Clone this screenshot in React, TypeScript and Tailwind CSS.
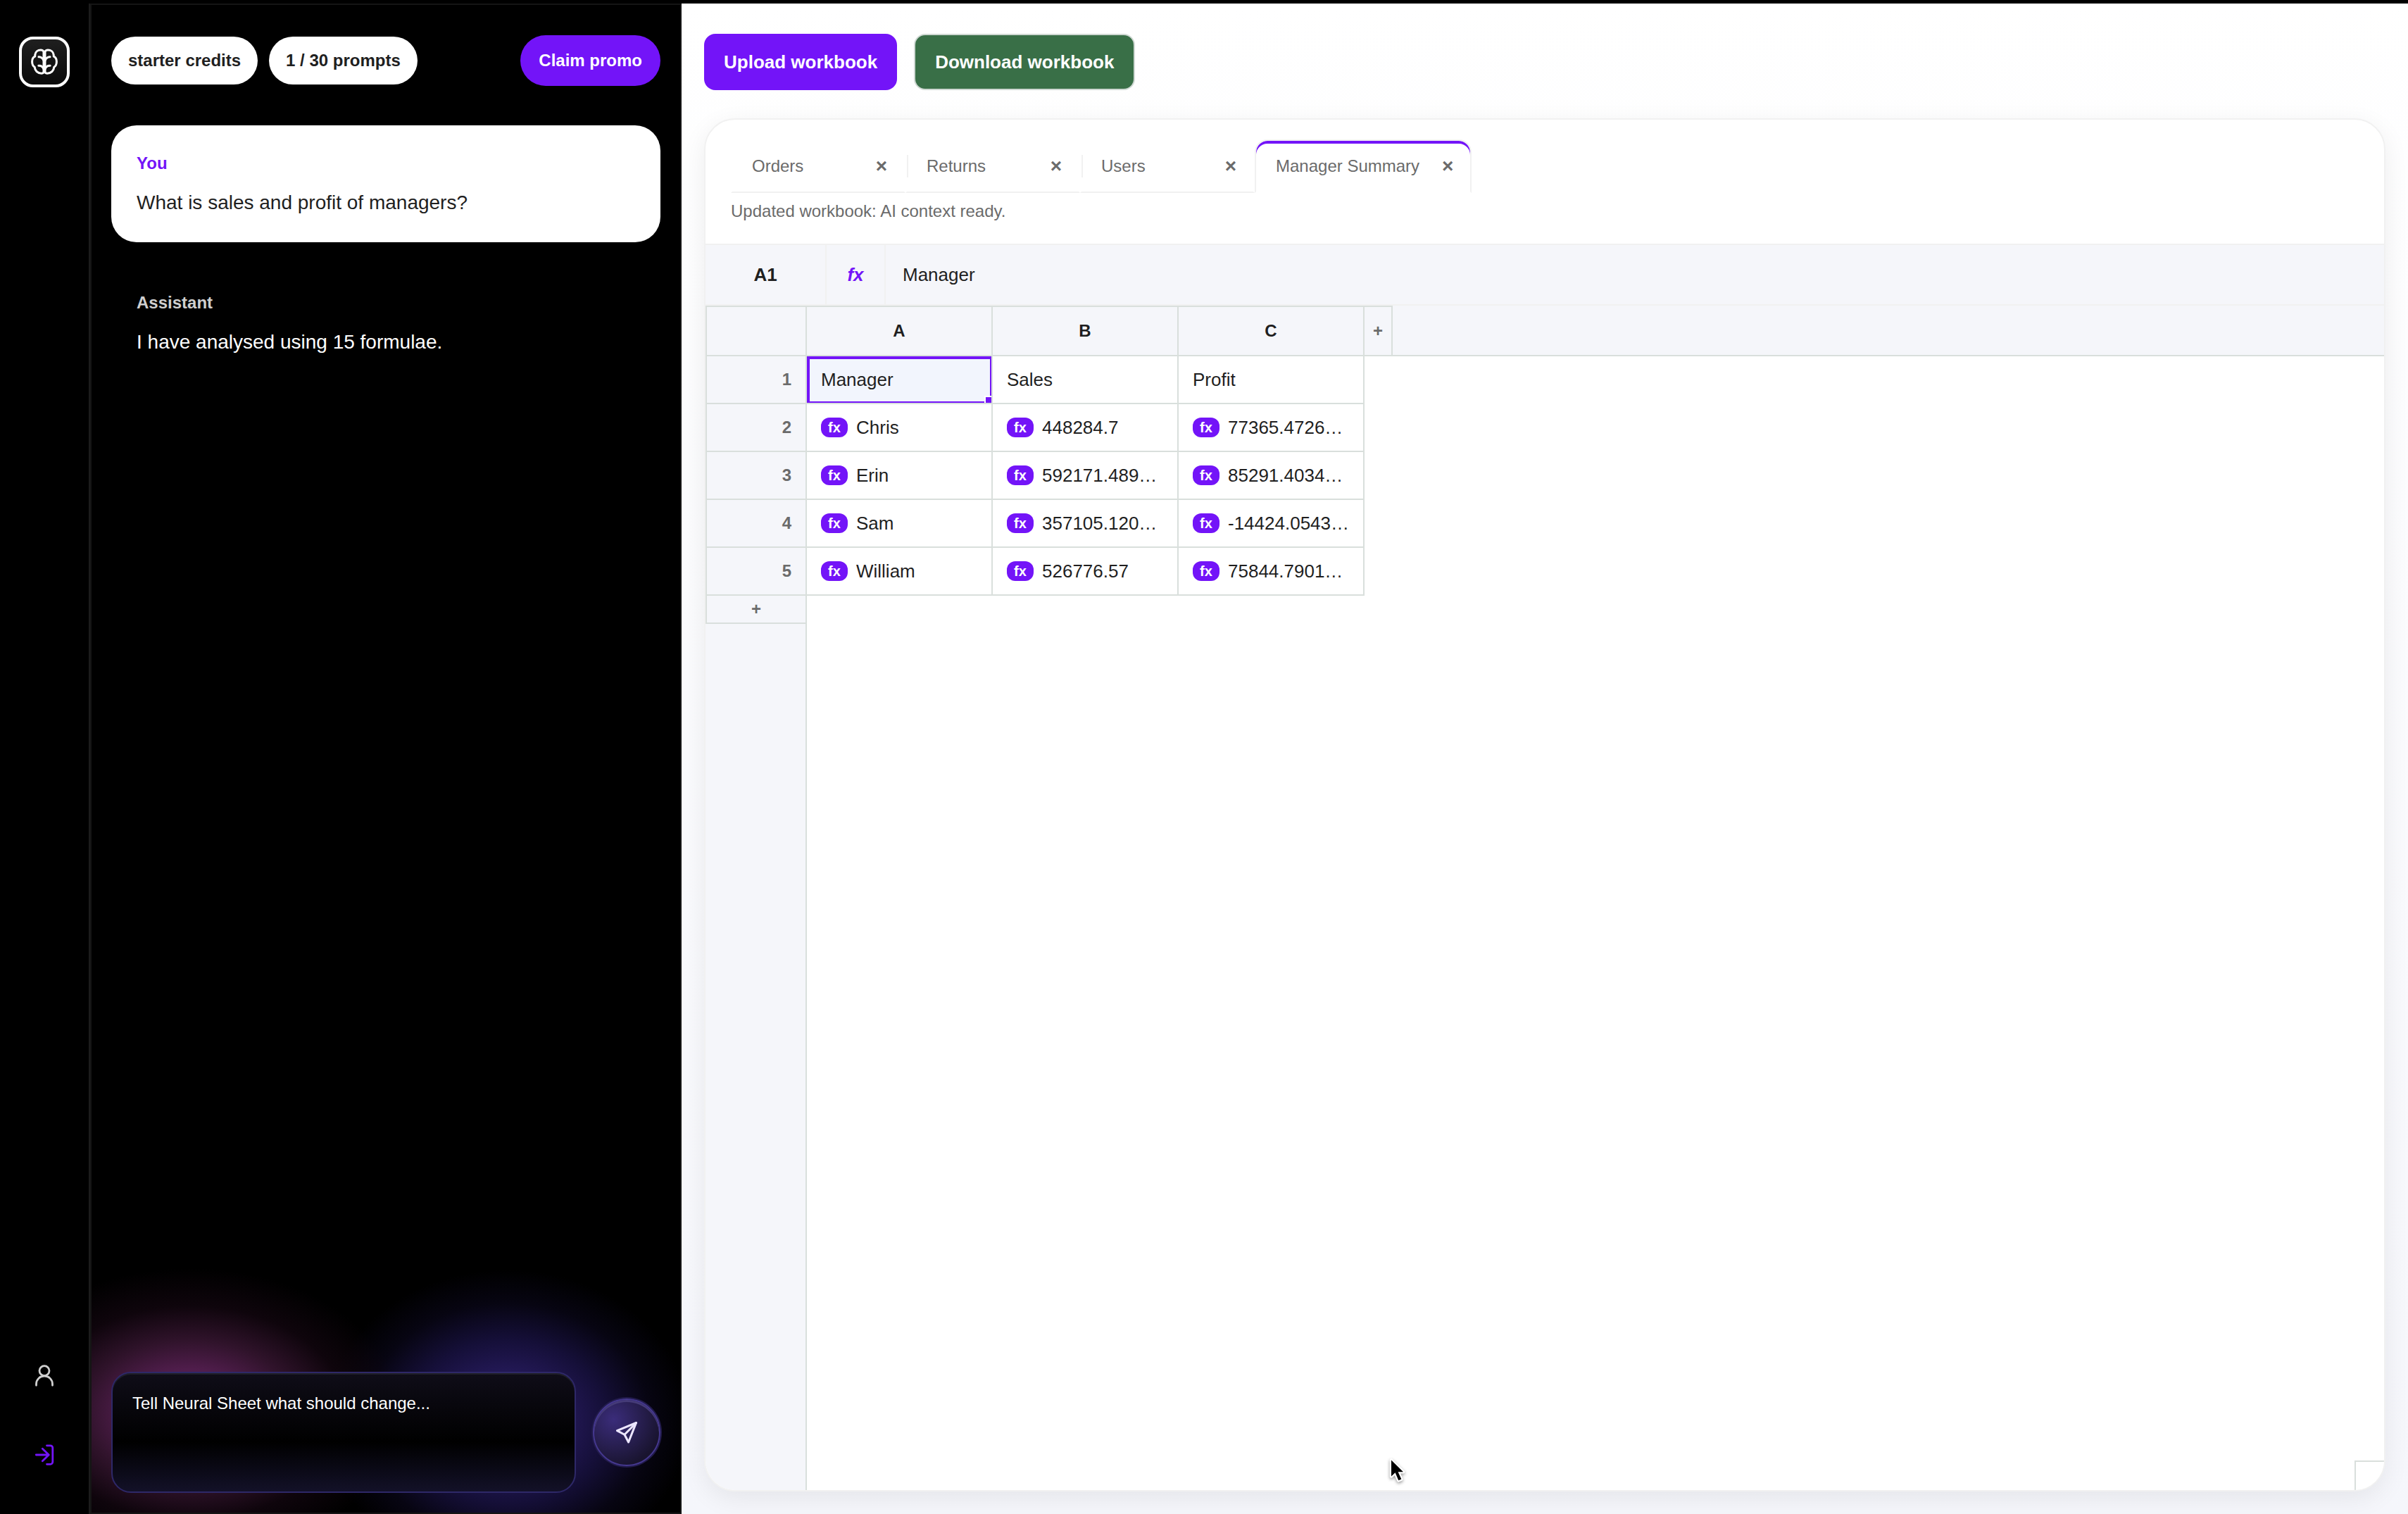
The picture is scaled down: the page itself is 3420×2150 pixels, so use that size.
import type { ReactNode } from "react";

type Cell = { value: string; formula?: boolean };

const TABS = [
  { name: "Orders", active: false },
  { name: "Returns", active: false },
  { name: "Users", active: false },
  { name: "Manager Summary", active: true },
];

const COLUMNS = ["A", "B", "C"];

const f = (value: string): Cell => ({ value, formula: true });

const ROWS: Cell[][] = [
  [{ value: "Manager" }, { value: "Sales" }, { value: "Profit" }],
  [f("Chris"), f("448284.7"), f("77365.4726…")],
  [f("Erin"), f("592171.489…"), f("85291.4034…")],
  [f("Sam"), f("357105.120…"), f("-14424.0543…")],
  [f("William"), f("526776.57"), f("75844.7901…")],
];

function BrainIcon() {
  return (
    <svg viewBox="0 0 40 40" className="size-10" fill="none" stroke="white" strokeWidth="3" strokeLinecap="round" strokeLinejoin="round" aria-hidden="true">
      <path d="M19 5.500C18.400 3.600 16.800 3 14.800 3 10.500 3 7.300 5.800 6.800 9.800L6.700 12.200C3.800 13.400 2.600 16 2.600 19.500 2.600 23 3.800 25.800 6.200 27.200 6.500 32.500 10.500 36.200 15.800 36.200 17.300 36.200 18.600 35.600 19 34.500Z" />
      <path d="M21 5.500C21.600 3.600 23.200 3 25.200 3 29.500 3 32.700 5.800 33.200 9.800L33.300 12.200C36.200 13.400 37.400 16 37.400 19.500 37.400 23 36.200 25.800 33.800 27.200 33.500 32.500 29.500 36.200 24.200 36.200 22.700 36.200 21.400 35.600 21 34.500Z" />
      <path d="M12 12.800C15.500 13 18 15 19 18M28 12.800C24.500 13 22 15 21 18M11.800 25.200C15.500 25 18 27 19 30M28.200 25.200C24.500 25 22 27 21 30" />
    </svg>
  );
}

function UserIcon() {
  return (
    <svg viewBox="0 0 32 32" className="size-8" fill="none" stroke="#cfcfcf" strokeWidth="2.800" strokeLinecap="round" aria-hidden="true">
      <circle cx="16" cy="8.600" r="7" />
      <path d="M4.500 29.300V27.500a11.500 11.500 0 0 1 23 0v1.800" />
    </svg>
  );
}

function SignInIcon() {
  return (
    <svg viewBox="0 0 32 32" className="size-8" fill="none" stroke="#7314f8" strokeWidth="2.800" strokeLinecap="round" strokeLinejoin="round" aria-hidden="true">
      <path d="M19.500 2.800H24.500a3.300 3.300 0 0 1 3.300 3.300V26a3.300 3.300 0 0 1-3.300 3.300H19.500" />
      <path d="M4.300 16H22M13.300 7.300L22.300 16L13.300 24.700" />
    </svg>
  );
}

function SendIcon() {
  return (
    <svg viewBox="0 0 32 32" className="size-8" fill="none" stroke="#ece6ff" strokeWidth="3" strokeLinecap="round" strokeLinejoin="round" aria-hidden="true">
      <path d="M29.500 2.500L2.500 13.600L13 19.300L18.600 30Z" />
      <path d="M29.500 2.500L13 19.300" />
    </svg>
  );
}

function Cursor() {
  return (
    <svg viewBox="0 0 28 40" className="pointer-events-none absolute bottom-[6px] left-[970px] h-10 w-7 drop-shadow-[0_2px_2px_rgba(0,0,0,0.4)]" aria-hidden="true">
      <path d="M4 3.500V26.500L9.600 21.300L14.300 32.300L18.300 30.600L13.600 20.300H21Z" fill="black" stroke="white" strokeWidth="4.500" strokeLinejoin="round" paintOrder="stroke" />
    </svg>
  );
}

function Rail() {
  return (
    <nav aria-label="Main" className="flex w-32 shrink-0 flex-col items-center border-r-2 border-[#1c1c1c] pt-[47px] pb-[68px]">
      <a href="#home" aria-label="Home" className="flex size-[72px] items-center justify-center rounded-[20px] border-4 border-white bg-linear-to-b from-[#1f1f1f] to-[#0a0a0a]">
        <BrainIcon />
      </a>
      <div className="mt-auto flex flex-col gap-20">
        <button type="button" aria-label="Account"><UserIcon /></button>
        <button type="button" aria-label="Sign in"><SignInIcon /></button>
      </div>
    </nav>
  );
}

function Pill({ children }: { children: ReactNode }) {
  return (
    <span className="flex h-[68px] items-center rounded-full bg-white px-6 text-[24px] leading-8 font-bold text-[#1f1f1f]">{children}</span>
  );
}

function Chat() {
  return (
    <section aria-label="Chat" className="flex w-[840px] shrink-0 flex-col border-2 border-[#151515]">
      <header className="flex items-center gap-4 px-7 pt-[43px]">
        <Pill>starter credits</Pill>
        <Pill>1 / 30 prompts</Pill>
        <button type="button" className="ml-auto h-[72px] rounded-full bg-[#7314f8] px-[26px] text-[24px] leading-8 font-bold text-white">Claim promo</button>
      </header>
      <div className="mt-14 flex flex-col gap-8 px-7">
        <article className="rounded-[36px] bg-white px-9 pt-10 pb-[34px]">
          <h2 className="text-[24px] leading-7 font-bold text-[#7314f8]">You</h2>
          <p className="mt-5 text-[28px] leading-[44px] text-[#1f1f1f]">What is sales and profit of managers?</p>
        </article>
        <article className="px-9 pt-10 pb-[34px]">
          <h2 className="text-[24px] leading-7 font-bold text-[#cfcfcf]">Assistant</h2>
          <p className="mt-5 text-[28px] leading-[44px] text-white">I have analysed using 15 formulae.</p>
        </article>
      </div>
      <form className="mt-auto flex items-center gap-6 bg-[radial-gradient(300px_205px_at_140px_256px,#6b2565_0%,#531e4f_28%,#30132b_50%,#12060fcc_74%,#00000000_100%),radial-gradient(260px_215px_at_590px_268px,#2c1c70_0%,#241958_30%,#150f38_54%,#070512_78%,#00000000_100%)] px-7 pt-[198px] pb-7">
        <textarea
          aria-label="Prompt"
          placeholder="Tell Neural Sheet what should change..."
          className="h-[172px] min-w-0 flex-1 resize-none rounded-[28px] border-2 border-[#2e2868] bg-[linear-gradient(#0f0d18,#000_58%,#131128)] px-7 py-[25px] text-[24px] leading-9 text-white shadow-[inset_0_2px_0_#202028] placeholder:text-white"
        />
        <button type="button" aria-label="Send" className="flex size-24 items-center justify-center rounded-full border-2 border-[#45388f] bg-[radial-gradient(circle_at_30%_30%,#3a2c7a,#19142f_75%)] shadow-[0_0_0_2px_#221b4c,inset_0_3px_0_#453b78]">
          <SendIcon />
        </button>
      </form>
    </section>
  );
}

function Tabs() {
  return (
    <div role="tablist" className="flex">
      {TABS.map((tab, i) => (
        <div
          key={tab.name}
          className={
            tab.active
              ? "flex h-[76px] items-center gap-[26px] rounded-t-[18px] border-2 border-[#f1f1f1] border-b-transparent pr-[18px] pl-7 shadow-[inset_0_4px_0_#7314f8]"
              : "relative flex h-[76px] w-[248px] items-center justify-between border-2 border-transparent border-b-[#f1f1f1] pr-[18px] pl-7"
          }
        >
          {i > 0 && !tab.active && <span className="absolute top-5 left-0 h-8 w-0.5 bg-[#f1f1f1]" />}
          <button type="button" role="tab" aria-selected={tab.active} className="text-[24px] leading-8 whitespace-nowrap text-[#6b6b6b]">{tab.name}</button>
          <button type="button" aria-label={`Close ${tab.name}`} className="w-7 text-center text-[28px] leading-8 font-bold text-[#6b6b6b]">×</button>
        </div>
      ))}
    </div>
  );
}

function FormulaBar() {
  return (
    <div className="flex h-[88px] items-stretch border-y-2 border-[#f1f1f1] bg-[#f5f6fa] text-[26px] leading-9">
      <div className="flex w-[172px] items-center justify-center border-r-2 border-[#f1f1f1] font-bold text-[#1f1f1f]">A1</div>
      <div className="flex w-[84px] items-center justify-center border-r-2 border-[#f1f1f1] font-bold text-[#7314f8] italic">fx</div>
      <input aria-label="Formula" defaultValue="Manager" className="min-w-0 flex-1 bg-transparent px-6 text-[#1f1f1f] outline-none" />
    </div>
  );
}

function Sheet() {
  return (
    <div className="flex flex-1 flex-col">
      <table className="w-full table-fixed border-separate border-spacing-0 text-[#1f1f1f]">
        <colgroup>
          <col className="w-36" />
          <col className="w-[264px]" />
          <col className="w-[264px]" />
          <col className="w-[264px]" />
          <col className="w-10" />
          <col />
        </colgroup>
        <thead>
          <tr className="h-[72px] bg-[#f5f6fa] text-[24px] leading-8">
            <td className="border-2 border-[#d9dfdc]" />
            {COLUMNS.map((name) => (
              <th key={name} scope="col" className="border-y-2 border-r-2 border-[#d9dfdc] p-0">{name}</th>
            ))}
            <td className="border-y-2 border-r-2 border-[#d9dfdc] p-0 text-center">
              <button type="button" aria-label="Add column" className="font-bold text-[#6b6b6b]">+</button>
            </td>
            <td className="border-b-2 border-[#d9dfdc]" />
          </tr>
        </thead>
        <tbody>
          {ROWS.map((cells, r) => (
            <tr key={r} className="h-[68px]">
              <th scope="row" className="border-x-2 border-b-2 border-[#d9dfdc] bg-[#f5f6fa] py-0 pr-5 pl-0 text-right text-[24px] leading-8 text-[#6b6b6b]">{r + 1}</th>
              {cells.map((cell, c) => {
                const selected = r === 0 && c === 0;
                return (
                  <td
                    key={c}
                    className={
                      selected
                        ? "relative border-r-2 border-b-2 border-[#d9dfdc] bg-[#f2f5fd] py-0 pr-0 pl-5"
                        : "border-r-2 border-b-2 border-[#d9dfdc] py-0 pr-0 pl-5"
                    }
                  >
                    <div className="flex items-center gap-3 text-[26px] leading-9 whitespace-nowrap">
                      {cell.formula && (
                        <span className="flex h-7 w-[38px] items-center justify-center rounded-xl bg-[#7314f8] text-[20px] leading-7 font-bold text-white">fx</span>
                      )}
                      {cell.value}
                    </div>
                    {selected && (
                      <>
                        <span className="absolute inset-0 border-t-4 border-r-2 border-b-2 border-l-4 border-[#7314f8]" />
                        <span className="absolute right-0 bottom-0 size-[10px] border-t-2 border-l-2 border-white bg-[#7314f8]" />
                      </>
                    )}
                  </td>
                );
              })}
            </tr>
          ))}
          <tr className="h-10">
            <td className="border-x-2 border-b-2 border-[#d9dfdc] bg-[#f5f6fa] p-0 text-center text-[24px] leading-8">
              <button type="button" aria-label="Add row" className="font-bold text-[#6b6b6b]">+</button>
            </td>
          </tr>
        </tbody>
      </table>
      <div className="w-36 flex-1 border-r-2 border-[#d9dfdc] bg-[#f5f6fa]" />
    </div>
  );
}

export default function App() {
  return (
    <div className="flex min-h-screen border-t-[5px] border-black bg-black font-['Liberation_Sans',Arial,sans-serif]">
      <Rail />
      <Chat />
      <main className="flex min-w-0 flex-1 flex-col bg-linear-to-b from-white to-[#f5f6fb] px-8 pt-[43px] pb-8">
        <div className="flex gap-6">
          <button type="button" className="h-20 rounded-2xl bg-[#7314f8] px-7 text-[26px] leading-9 font-bold text-white">Upload workbook</button>
          <button type="button" className="h-20 rounded-2xl border-2 border-[#cfd8d3] bg-[#396f47] px-7 text-[26px] leading-9 font-bold text-white">Download workbook</button>
        </div>
        <section aria-label="Workbook" className="relative mt-10 flex flex-1 flex-col overflow-hidden rounded-[44px] border-2 border-[#f1f1f1] bg-white shadow-[0_10px_36px_rgba(0,0,0,0.07)]">
          <div className="px-9 pt-7 pb-[30px]">
            <Tabs />
            <p className="mt-[10px] text-[24px] leading-8 text-[#6b6b6b]">Updated workbook: AI context ready.</p>
          </div>
          <FormulaBar />
          <Sheet />
          <span className="absolute right-0 bottom-0 size-[42px] border-t-2 border-l-2 border-[#d9dfdc] bg-white" />
          <Cursor />
        </section>
      </main>
    </div>
  );
}
